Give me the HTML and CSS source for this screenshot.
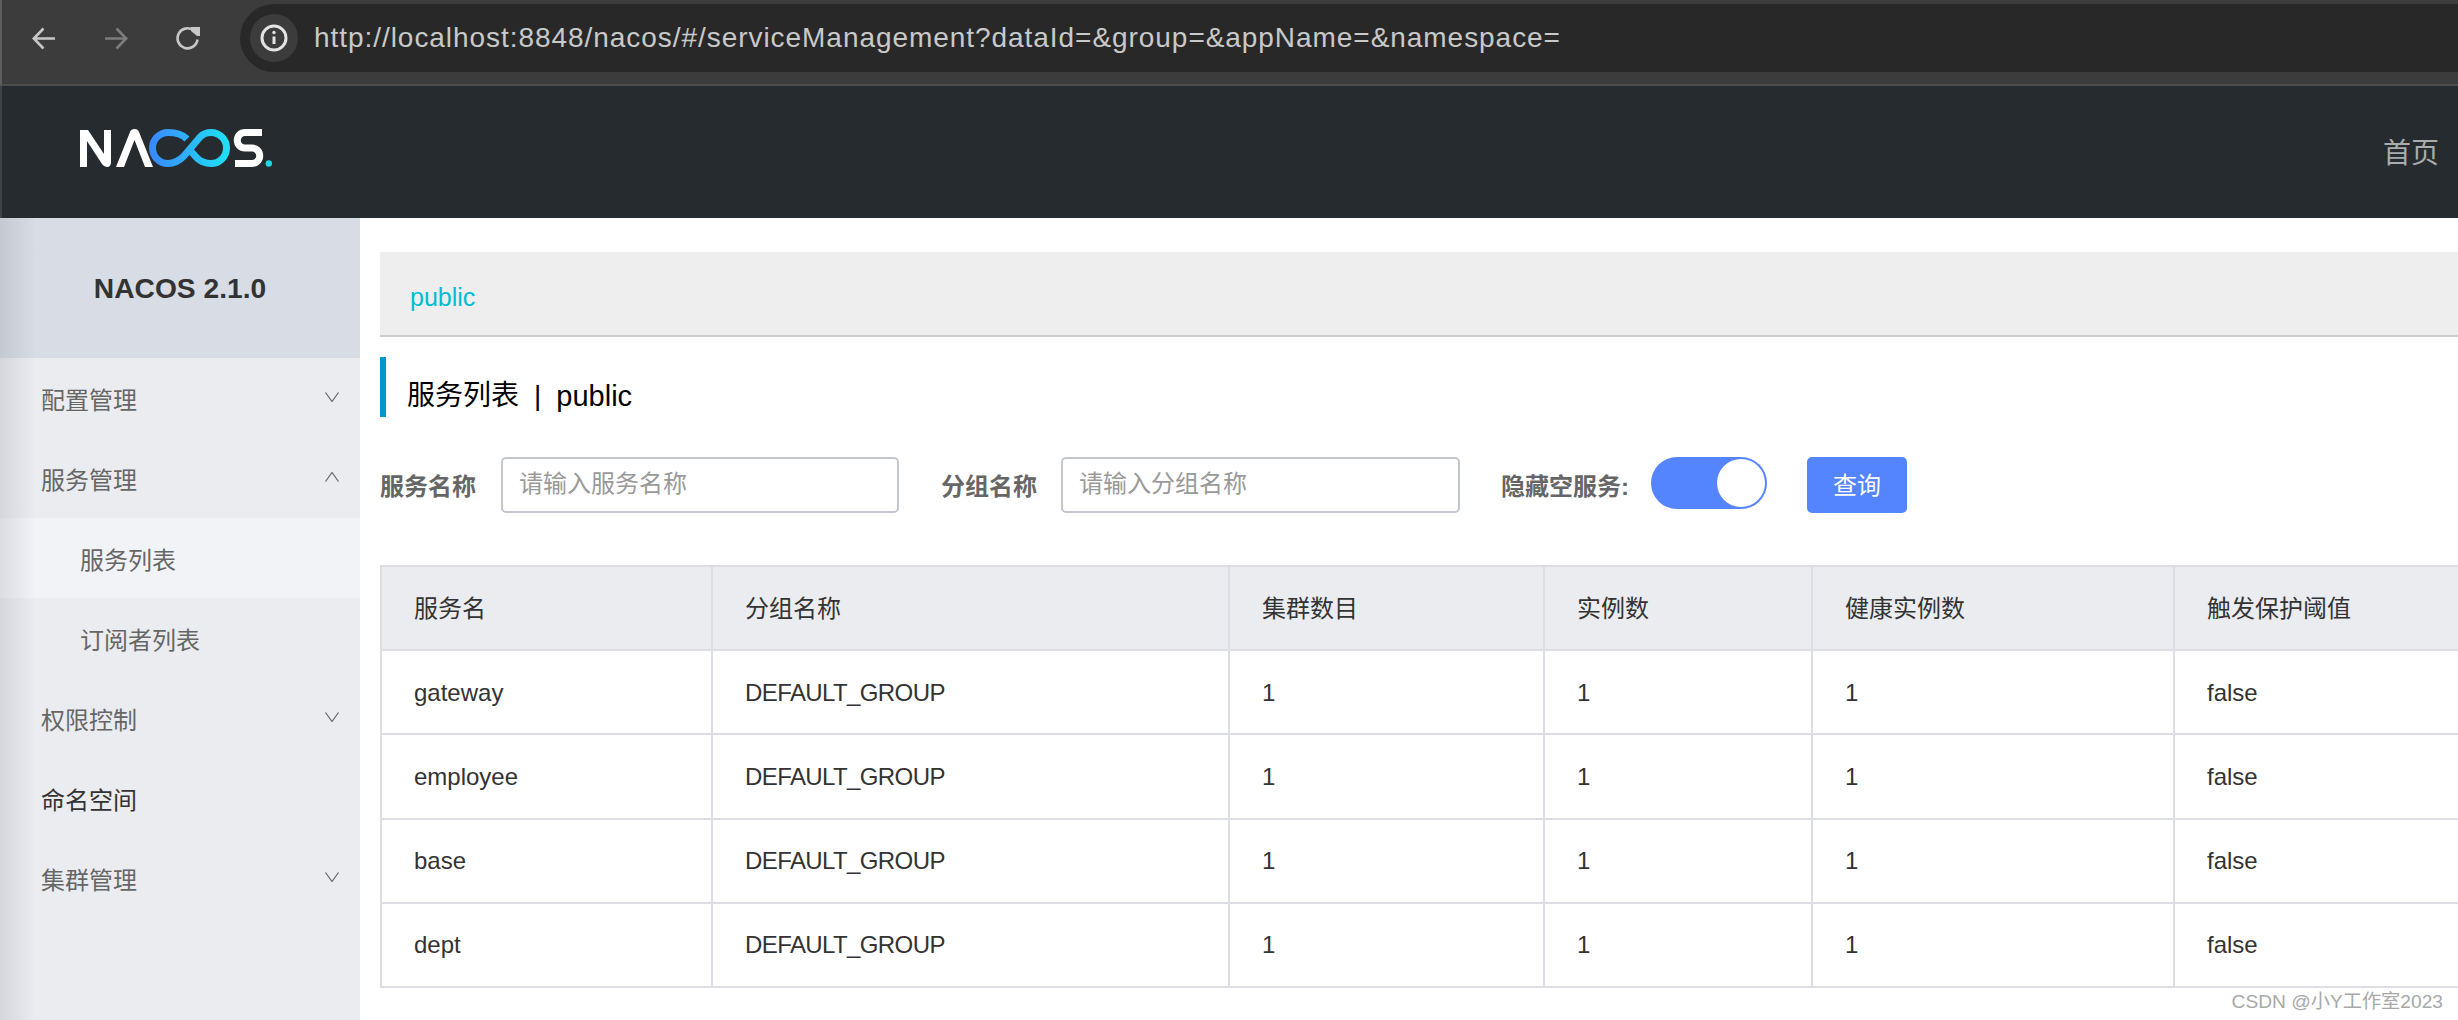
FILE: index.html
```html
<!DOCTYPE html>
<html lang="zh-CN">
<head>
<meta charset="utf-8">
<title>Nacos</title>
<link rel="stylesheet" href="styles.css">
</head>
<body>
<div class="browser-bar">
  <div class="nav-icons">
    <svg class="nav-icon" viewBox="0 0 24 24"><path d="M23 12.5H2M11.5 2.5L1.8 12.5 11.5 22.5"/></svg>
    <svg class="nav-icon dim" viewBox="0 0 24 24"><path d="M1 12.5H22M12.5 2.5L22.2 12.5 12.5 22.5"/></svg>
    <svg class="nav-icon" viewBox="0 0 24 24"><path d="M21.5 13.5A10 10 0 1 1 17.5 4.3"/><path class="solid" d="M15 1H24V10H21L15 5Z"/></svg>
  </div>
  <div class="address">
    <span class="info-badge">
      <svg class="info-icon" viewBox="0 0 28 28"><circle cx="14" cy="14" r="12"/><path d="M14 12.5V20"/><circle class="solid" cx="14" cy="8.5" r="1.7"/></svg>
    </span>
    <span class="url">http://localhost:8848/nacos/#/serviceManagement?dataId=&amp;group=&amp;appName=&amp;namespace=</span>
  </div>
</div>
<header class="top-header">
  <svg class="logo" viewBox="0 0 192 38">
    <defs><linearGradient id="lg" gradientUnits="userSpaceOnUse" x1="69" y1="0" x2="150" y2="0"><stop offset="0" stop-color="#3a86ff"/><stop offset="1" stop-color="#1ee3f7"/></linearGradient></defs>
    <path class="logo-white" d="M0 1H8L24 25V1H31V33Q31 38 27 38 24 38 22 35L7 12V38H0Z"/>
    <path class="logo-white" d="M36 38L50 3Q51 0 54.500 0 58 0 59 3L73 38H65L54.500 11 44 38Z"/>
    <path class="logo-loop" d="M107 10C103 6 96 3.500 88 3.500A15.500 15.500 0 0 0 88 34.500C95 34.500 100 31 104 27L120 8C123 5 127 3.500 131 3.500A15.500 15.500 0 0 1 131 34.500C125 34.500 120 32 117 29L108 19"/>
    <path class="logo-s" d="M182 3.500H165A7.700 7.700 0 0 0 165 19H172A7.700 7.700 0 0 1 172 34.500H155"/>
    <circle class="logo-dot" cx="188.800" cy="34.500" r="3.200"/>
  </svg>
  <span class="home-link">首页</span>
</header>
<div class="main">
  <aside class="sidebar">
    <div class="side-title">NACOS 2.1.0</div>
    <nav class="menu">
      <div class="menu-item"><span>配置管理</span><svg class="chev" viewBox="0 0 14 10"><path d="M.5 .5L7 9.500 13.500 .5"/></svg></div>
      <div class="menu-item"><span>服务管理</span><svg class="chev" viewBox="0 0 14 10"><path d="M.5 9.500L7 .5 13.500 9.500"/></svg></div>
      <div class="menu-item sub active"><span>服务列表</span></div>
      <div class="menu-item sub"><span>订阅者列表</span></div>
      <div class="menu-item"><span>权限控制</span><svg class="chev" viewBox="0 0 14 10"><path d="M.5 .5L7 9.500 13.500 .5"/></svg></div>
      <div class="menu-item strong"><span>命名空间</span></div>
      <div class="menu-item"><span>集群管理</span><svg class="chev" viewBox="0 0 14 10"><path d="M.5 .5L7 9.500 13.500 .5"/></svg></div>
    </nav>
  </aside>
  <main class="content">
    <div class="ns-bar"><span class="ns-link">public</span></div>
    <h1 class="page-title"><span>服务列表</span><span class="sep">|</span><span class="title-ns">public</span></h1>
    <form class="filters">
      <label class="f-label">服务名称</label>
      <input class="f-input" type="text" placeholder="请输入服务名称">
      <label class="f-label group">分组名称</label>
      <input class="f-input wide" type="text" placeholder="请输入分组名称">
      <label class="f-label hide">隐藏空服务:</label>
      <span class="switch"><span class="knob"></span></span>
      <button class="query" type="button">查询</button>
    </form>
    <table class="services">
      <colgroup><col class="c1"><col class="c2"><col class="c3"><col class="c4"><col class="c5"><col class="c6"></colgroup>
      <thead>
        <tr><th>服务名</th><th>分组名称</th><th>集群数目</th><th>实例数</th><th>健康实例数</th><th>触发保护阈值</th></tr>
      </thead>
      <tbody>
        <tr><td>gateway</td><td class="grp">DEFAULT_GROUP</td><td>1</td><td>1</td><td>1</td><td>false</td></tr>
        <tr><td>employee</td><td class="grp">DEFAULT_GROUP</td><td>1</td><td>1</td><td>1</td><td>false</td></tr>
        <tr><td>base</td><td class="grp">DEFAULT_GROUP</td><td>1</td><td>1</td><td>1</td><td>false</td></tr>
        <tr><td>dept</td><td class="grp">DEFAULT_GROUP</td><td>1</td><td>1</td><td>1</td><td>false</td></tr>
      </tbody>
    </table>
  </main>
</div>
<div class="watermark">CSDN @小Y工作室2023</div>
</body>
</html>
```
FILE: styles.css
```css
* { box-sizing: border-box; }
html, body { margin: 0; padding: 0; height: 100%; overflow: hidden; background: #fff; }
body {
  position: relative;
  width: 2458px;
  height: 1020px;
  font-family: "Liberation Sans", "Noto Sans CJK SC", sans-serif;
  font-size: 24px;
  color: #333;
}

/* browser chrome */
.browser-bar {
  height: 86px;
  background: #3c3c3c;
  border-bottom: 2px solid #4c4c4c;
  border-left: 2px solid #5e5e5e;
  display: flex;
  align-items: flex-start;
  overflow: hidden;
}
.nav-icons { display: flex; gap: 48px; padding: 26px 0 0 30px; width: 238px; flex: none; }
.nav-icon { width: 24px; height: 24px; flex: none; fill: none; stroke: #c7c7c7; stroke-width: 2.6; }
.nav-icon.dim { stroke: #7c7c7c; }
.nav-icon .solid { fill: #c7c7c7; stroke: none; }
.address {
  flex: 1;
  margin-top: 4px;
  height: 68px;
  background: #282828;
  border-radius: 34px 0 0 34px;
  display: flex;
  align-items: center;
  padding-left: 10px;
}
.info-badge { width: 48px; height: 48px; border-radius: 50%; background: #3c3c3c; display: flex; align-items: center; justify-content: center; flex: none; }
.info-icon { width: 28px; height: 28px; fill: none; stroke: #e3e3e3; stroke-width: 3; }
.info-icon .solid { fill: #e3e3e3; stroke: none; }
.url { margin-left: 16px; font-size: 28px; letter-spacing: .95px; color: #c9c9c9; white-space: nowrap; }

/* top header */
.top-header {
  height: 132px;
  background: #262b2f;
  border-left: 2px solid #3f4347;
  display: flex;
  align-items: center;
  justify-content: space-between;
  padding: 0 19px 0 78px;
}
.logo { width: 192px; height: 38px; flex: none; margin-bottom: 8px; }
.logo-white { fill: #fff; }
.logo-loop { fill: none; stroke: url(#lg); stroke-width: 7; }
.logo-s { fill: none; stroke: #fff; stroke-width: 7; }
.logo-dot { fill: #1ed8e8; }
.home-link { font-size: 28px; color: #a9abad; margin-bottom: 2px; }

/* layout */
.main { display: flex; height: 802px; }

/* sidebar */
.sidebar { width: 360px; flex: none; background: #ebecf0; position: relative; }
.sidebar::before {
  content: "";
  position: absolute;
  top: 0;
  bottom: 0;
  left: 0;
  width: 36px;
  background: linear-gradient(to right, rgba(60, 70, 90, .13), rgba(60, 70, 90, 0));
}
.side-title {
  height: 140px;
  background: #d8dce4;
  display: flex;
  align-items: center;
  justify-content: center;
  font-size: 28.200px;
  font-weight: 700;
  color: #333;
}
.menu-item {
  height: 80px;
  display: flex;
  align-items: center;
  justify-content: space-between;
  padding: 0 21px 0 41px;
  color: #666;
}
.menu-item.sub { padding-left: 80px; }
.menu-item.active { background: #f2f3f7; }
.menu-item.strong { color: #333; }
.chev { width: 14px; height: 10px; flex: none; fill: none; stroke: #666; stroke-width: 1.2; margin-top: -2px; }

/* content */
.content { flex: 1; min-width: 0; padding: 34px 0 0 20px; overflow: hidden; }
.ns-bar {
  height: 85px;
  background: #eee;
  border-bottom: 2px solid #ccc;
  padding: 8px 0 0 30px;
  display: flex;
  align-items: center;
}
.ns-link { color: #00bcd4; font-size: 25px; }
.page-title {
  margin: 20px 0 0;
  height: 60px;
  border-left: 6px solid #09c;
  padding: 17px 0 0 21px;
  font-size: 28px;
  font-weight: 400;
  line-height: 44px;
  color: #000;
  display: flex;
}
.sep { margin: 0 15px; }
.title-ns { font-size: 29px; }
.filters { margin-top: 40px; height: 56px; display: flex; align-items: center; }
.f-label { font-weight: 700; color: #666; white-space: nowrap; flex: none; margin-right: 25px; margin-bottom: 1px; }
.f-label.group { margin-left: 42px; margin-right: 24px; }
.f-label.hide { margin-left: 41px; margin-right: 22px; }
.f-input {
  width: 398px;
  height: 56px;
  flex: none;
  border: 2px solid #c4c6cf;
  border-radius: 5px;
  padding: 0 16px 2px;
  font: inherit;
  color: #333;
  background: #fff;
  outline: none;
}
.f-input.wide { width: 399px; }
.f-input::placeholder { color: #999; opacity: 1; }
.switch {
  width: 116px;
  height: 52px;
  flex: none;
  align-self: flex-start;
  border-radius: 26px;
  background: #5584ff;
  display: flex;
  justify-content: flex-end;
  align-items: center;
  padding-right: 2px;
}
.knob { width: 48px; height: 48px; border-radius: 50%; background: #fff; }
.query {
  width: 100px;
  height: 56px;
  flex: none;
  margin-left: 40px;
  border: 0;
  border-radius: 5px;
  background: #5584ff;
  color: #fff;
  font: inherit;
  padding: 0 0 3px;
}

/* table */
.services {
  margin-top: 52px;
  width: 2200px;
  table-layout: fixed;
  border-collapse: separate;
  border-spacing: 0;
  border-top: 2px solid #dcdee3;
  border-left: 2px solid #dcdee3;
}
.c1 { width: 331px; }
.c2 { width: 517px; }
.c3 { width: 315px; }
.c4 { width: 268px; }
.c5 { width: 362px; }
.c6 { width: 407px; }
.services th, .services td {
  border-right: 2px solid #dcdee3;
  border-bottom: 2px solid #dcdee3;
  text-align: left;
  font-weight: 400;
  color: #333;
}
.services td { height: 84.25px; padding: 1px 0 0 32px; }
.services th { height: 84px; background: #ebecf0; padding: 0 0 4px 32px; }
.services td.grp { letter-spacing: -.6px; }

/* watermark lies over the page corner */
.watermark {
  position: absolute;
  right: 15px;
  bottom: 6px;
  font-size: 19.200px;
  line-height: 24px;
  color: #a8a8a8;
}
```
